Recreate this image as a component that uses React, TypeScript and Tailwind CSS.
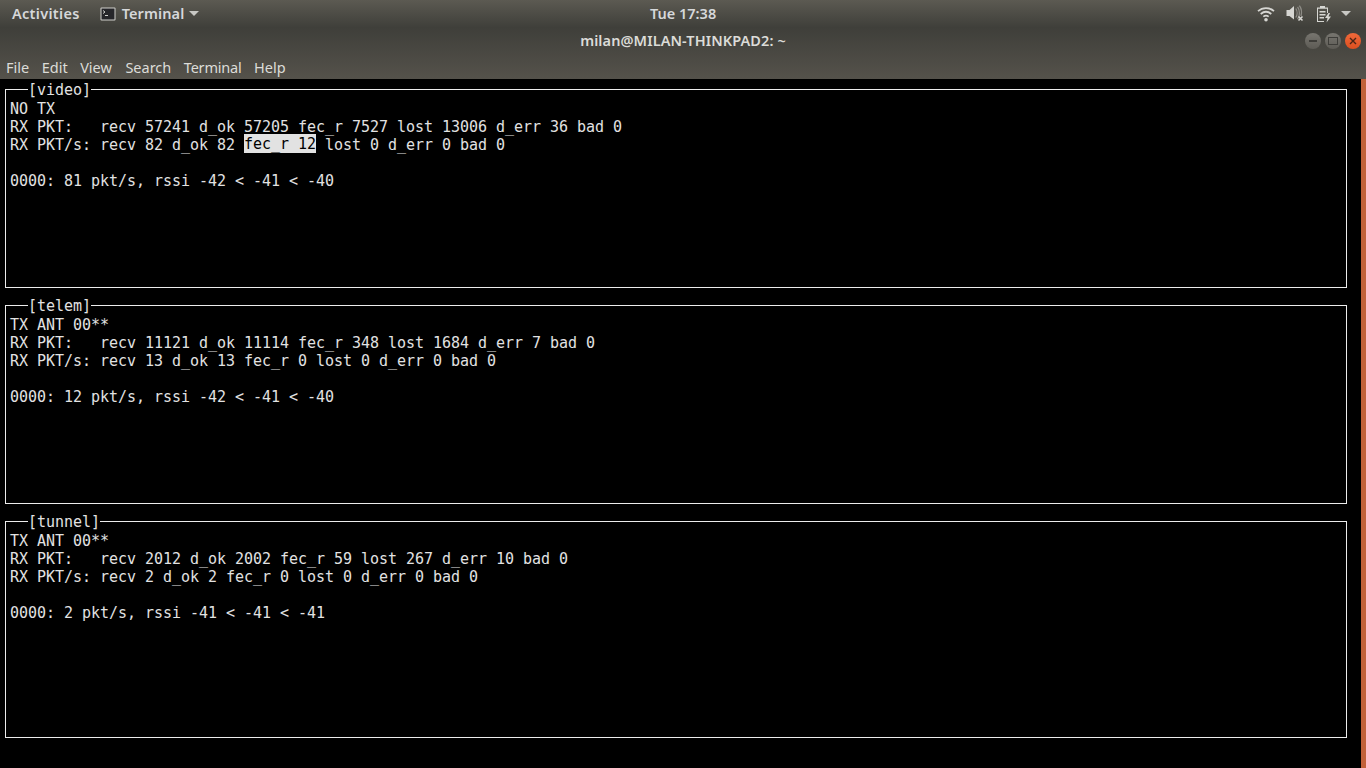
import React from "react";

type Seg = { t: string; hl?: boolean };

const panes: { title: string; h: string; lines: Seg[][] }[] = [
  {
    title: "[video]",
    h: "h-[199px]",
    lines: [
      [{ t: "NO TX" }],
      [{ t: "RX PKT:   recv 57241 d_ok 57205 fec_r 7527 lost 13006 d_err 36 bad 0" }],
      [{ t: "RX PKT/s: recv 82 d_ok 82 " }, { t: "fec_r 12", hl: true }, { t: " lost 0 d_err 0 bad 0" }],
      [{ t: " " }],
      [{ t: "0000: 81 pkt/s, rssi -42 < -41 < -40" }],
    ],
  },
  {
    title: "[telem]",
    h: "h-[199px]",
    lines: [
      [{ t: "TX ANT 00**" }],
      [{ t: "RX PKT:   recv 11121 d_ok 11114 fec_r 348 lost 1684 d_err 7 bad 0" }],
      [{ t: "RX PKT/s: recv 13 d_ok 13 fec_r 0 lost 0 d_err 0 bad 0" }],
      [{ t: " " }],
      [{ t: "0000: 12 pkt/s, rssi -42 < -41 < -40" }],
    ],
  },
  {
    title: "[tunnel]",
    h: "h-[217px]",
    lines: [
      [{ t: "TX ANT 00**" }],
      [{ t: "RX PKT:   recv 2012 d_ok 2002 fec_r 59 lost 267 d_err 10 bad 0" }],
      [{ t: "RX PKT/s: recv 2 d_ok 2 fec_r 0 lost 0 d_err 0 bad 0" }],
      [{ t: " " }],
      [{ t: "0000: 2 pkt/s, rssi -41 < -41 < -41" }],
    ],
  },
];

function Pane({ title, lines, h }: { title: string; lines: Seg[][]; h: string }) {
  return (
    <div className={`relative ${h} ml-[5px] mr-[14px] mb-[17px] border border-[#ececec] pl-[4px] pt-[8px]`}>
      <div className="absolute left-[22px] top-[-11px] h-[18px] bg-black leading-[22px] whitespace-pre">{title}</div>
      {lines.map((segs, i) => (
        <div key={i} className="h-[18px] leading-[22px] whitespace-pre">
          {segs.map((s, j) =>
            s.hl ? (
              <span key={j} className="bg-[#e2e2e2] text-black inline-block h-[19px]">
                <span className="relative top-[-1px]">{s.t}</span>
              </span>
            ) : (
              <span key={j}>{s.t}</span>
            )
          )}
        </div>
      ))}
    </div>
  );
}

function Wifi() {
  return (
    <svg width="18" height="16" viewBox="0 0 18 16" fill="none" stroke="#d6d6d2" strokeWidth="1.7">
      <path d="M1 5.2C5.5 1 12.5 1 17 5.2" />
      <path d="M3.7 8C7 5.2 11 5.2 14.3 8" />
      <path d="M6.3 10.6C8 9.3 10 9.3 11.7 10.6" />
      <circle cx="9" cy="13.8" r="1.8" fill="#d6d6d2" stroke="none" />
    </svg>
  );
}

function Speaker() {
  return (
    <svg width="18" height="17" viewBox="0 0 18 17" fill="none">
      <path d="M0.5 5H3.5L8 1V14.5L3.5 11H0.5Z" fill="#d6d6d2" />
      <path d="M9.8 3.5C11.5 6 11.5 10 9.8 12.5M11.6 1.8C14 5 14 11 11.6 14.2M13.4 0.6C15.5 3.5 15.8 8 15 11" stroke="#8e8c86" strokeWidth="1.3" />
      <path d="M12.5 11.5L16.5 15.5M16.5 11.5L12.5 15.5" stroke="#d6d6d2" strokeWidth="1.6" />
    </svg>
  );
}

function Battery() {
  return (
    <svg width="16" height="18" viewBox="0 0 16 18" fill="none">
      <path d="M4 2.5V1H9V2.5H12V8H11V3.7H2V16H8V17H1V2.5Z" fill="#d6d6d2" />
      <path d="M3.5 6H9.5V7.5H3.5ZM3.5 9H9.5V10.5H3.5ZM3.5 12H8V13.5H3.5Z" fill="#d6d6d2" />
      <path d="M12.5 8L9 13H11.5L10.5 17.5L15 11.5H12.5L14 8Z" fill="#d6d6d2" />
    </svg>
  );
}

function TerminalIcon() {
  return (
    <svg width="16" height="14" viewBox="0 0 16 14">
      <rect x="0.5" y="0.5" width="15" height="13" rx="1" fill="#d0d0cc" />
      <rect x="1.5" y="1.5" width="13" height="11" fill="#26262a" />
      <path d="M3 3.5L5 5L3 6.5M5 8.5H8" stroke="#d0d0cc" strokeWidth="1" fill="none" />
    </svg>
  );
}

function WinButton({ children, close }: { children: React.ReactNode; close?: boolean }) {
  return (
    <div
      className={
        close
          ? "w-[16px] h-[16px] rounded-full flex items-center justify-center bg-gradient-to-b from-[#f0693a] to-[#dc4f1f]"
          : "w-[16px] h-[16px] rounded-full flex items-center justify-center bg-gradient-to-b from-[#77756f] to-[#5d5b55]"
      }
    >
      {children}
    </div>
  );
}

export default function App() {
  return (
    <div className="w-[1366px] h-[768px] overflow-hidden flex flex-col bg-black font-['Noto_Sans',sans-serif]">
      <div className="bg-gradient-to-b from-[#5c5a52] via-[#3f3f3a] via-[35%] to-[#55524b] h-[79px] shrink-0 flex flex-col">
        <div className="h-[27px] relative flex items-center justify-between text-[14.5px] font-semibold text-[#d6d8da]">
          <div className="flex items-center pl-[12px]">
            <span className="tracking-[0.3px]">Activities</span>
            <span className="ml-[20px]"><TerminalIcon /></span>
            <span className="ml-[6px] tracking-[0.1px]">Terminal</span>
            <span className="ml-[5px] w-0 h-0 border-x-[5px] border-t-[5px] border-x-transparent border-t-[#c8c8c4]" />
          </div>
          <span className="absolute left-[650px] top-[3px]">Tue 17:38</span>
          <div className="flex items-center pr-[15px]">
            <Wifi />
            <span className="ml-[11px]"><Speaker /></span>
            <span className="ml-[12px]"><Battery /></span>
            <span className="ml-[9px] w-0 h-0 border-x-[5px] border-t-[5px] border-x-transparent border-t-[#c8c8c4]" />
          </div>
        </div>
        <div className="h-[27px] relative flex items-center justify-center text-[14.5px] font-semibold text-[#dcdcd8]">
          <span className="tracking-[0.1px]">milan@MILAN-THINKPAD2: ~</span>
          <div className="absolute right-[5px] top-[6px] flex gap-[4px]">
            <WinButton>
              <div className="w-[8px] h-[2px] bg-[#3e3d39]" />
            </WinButton>
            <WinButton>
              <div className="w-[10px] h-[8px] border border-[#3e3d39]" />
            </WinButton>
            <WinButton close>
              <svg width="8" height="8" viewBox="0 0 8 8" stroke="#4a2415" strokeWidth="1.4"><path d="M1 1L7 7M7 1L1 7" /></svg>
            </WinButton>
          </div>
        </div>
        <div className="h-[25px] flex items-center pl-[6px] pt-[2px] gap-[12.5px] text-[14.5px] text-[#dcdcd8]">
          <span>File</span>
          <span>Edit</span>
          <span>View</span>
          <span className="ml-[1px]">Search</span>
          <span className="tracking-[-0.2px]">Terminal</span>
          <span>Help</span>
        </div>
      </div>
      <div className="flex-1 flex bg-black">
        <div className="flex-1 pt-[10px] text-[#e2e2e2] text-[15px] tracking-[-0.03px] font-['DejaVu_Sans_Mono',monospace]">
          {panes.map((p) => (
            <Pane key={p.title} title={p.title} lines={p.lines} h={p.h} />
          ))}
        </div>
        <div className="w-[5px] bg-[#c2613a]" />
      </div>
    </div>
  );
}
